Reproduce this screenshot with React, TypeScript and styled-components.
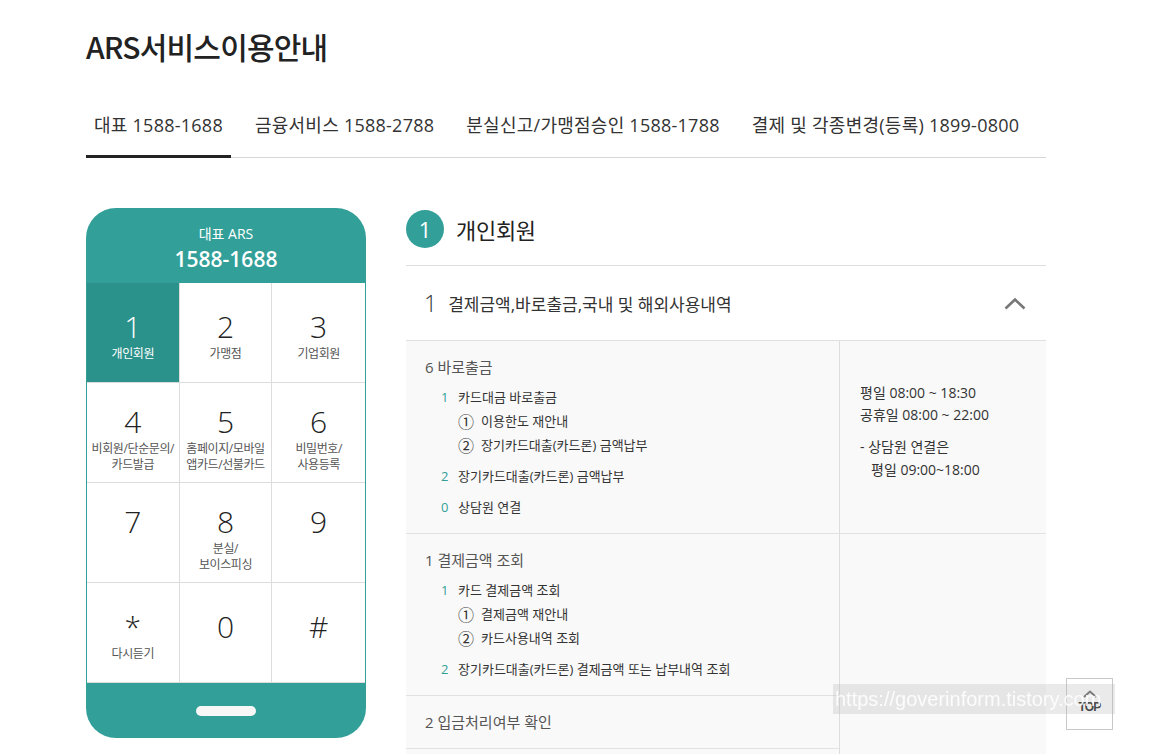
import React from "react";
import styled, { createGlobalStyle } from "styled-components";

const TEAL = "#339f99";
const TEAL_DARK = "#2b918b";

const GlobalStyle = createGlobalStyle`
  body {
    margin: 0;
    background: #fff;
    font-family: "Open Sans", "Noto Sans CJK KR", sans-serif;
    color: #333;
  }
`;

const Page = styled.div`
  width: 960px;
  padding: 28px 0 40px 86px;
`;

const Title = styled.h1`
  margin: 0;
  font-family: "Noto Sans CJK KR", sans-serif;
  font-size: 30px;
  line-height: 36px;
  font-weight: 500;
  letter-spacing: -0.8px;
  color: #222;
`;

const Tabs = styled.div`
  display: flex;
  gap: 16px;
  margin-top: 49px;
  border-bottom: 1px solid #d8d8d8;
`;

const Tab = styled.div<{ $active?: boolean }>`
  position: relative;
  padding: 0 8px 20px;
  font-size: 18px;
  line-height: 24px;
  letter-spacing: 0.25px;
  color: #333;
  white-space: nowrap;

  &::after {
    content: "";
    display: ${(p) => (p.$active ? "block" : "none")};
    position: absolute;
    left: 0;
    right: 0;
    bottom: -1px;
    height: 3px;
    background: #222;
  }
`;

const Main = styled.div`
  display: flex;
  align-items: flex-start;
  gap: 40px;
  margin-top: 50px;
`;

/* phone keypad */

const Phone = styled.div`
  width: 280px;
  flex-shrink: 0;
  border-radius: 30px;
  overflow: hidden;
`;

const PhoneHeader = styled.div`
  height: 75px;
  box-sizing: border-box;
  padding-top: 17px;
  background: ${TEAL};
  color: #fff;
  text-align: center;
`;

const HeaderLabel = styled.div`
  font-size: 14px;
  line-height: 18px;
`;

const HeaderNumber = styled.div`
  margin-top: 3px;
  font-size: 21px;
  line-height: 26px;
  font-weight: 600;
`;

const KeyGrid = styled.div`
  display: grid;
  grid-template-columns: repeat(3, 1fr);
  border-left: 1px solid ${TEAL};
  border-right: 1px solid ${TEAL};
  background: #fff;
`;

const Key = styled.div<{ $active?: boolean; $lines: number }>`
  height: 100px;
  box-sizing: border-box;
  padding-top: ${(p) => (p.$lines === 2 ? 23 : 28)}px;
  display: flex;
  flex-direction: column;
  align-items: center;
  border-bottom: 1px solid #dcdcdc;
  border-right: 1px solid #dcdcdc;
  background: ${(p) => (p.$active ? TEAL_DARK : "#fff")};
  color: ${(p) => (p.$active ? "#fff" : "#222")};

  &:nth-child(3n) {
    border-right: none;
  }
`;

const KeyNum = styled.div`
  font-size: 30px;
  line-height: 32px;
  font-weight: 300;
`;

const KeyLabel = styled.div<{ $active?: boolean }>`
  margin-top: 3px;
  font-size: 12px;
  line-height: 16px;
  text-align: center;
  letter-spacing: -0.4px;
  color: ${(p) => (p.$active ? "#fff" : "#555")};
`;

const PhoneFooter = styled.div`
  height: 55px;
  background: ${TEAL};
  display: flex;
  align-items: center;
  justify-content: center;
`;

const HomeBar = styled.div`
  width: 60px;
  height: 10px;
  border-radius: 5px;
  background: #f7f7f7;
`;

/* right content */

const Content = styled.div`
  flex: 1;
`;

const SectionHeader = styled.div`
  display: flex;
  align-items: center;
  gap: 12px;
  padding: 2px 0 17px;
  border-bottom: 1px solid #dedede;
`;

const Circle = styled.div`
  width: 38px;
  height: 38px;
  border-radius: 50%;
  background: ${TEAL};
  color: #fff;
  font-size: 22px;
  display: flex;
  align-items: center;
  justify-content: center;
`;

const SectionTitle = styled.div`
  font-size: 22px;
  color: #222;
  letter-spacing: -0.3px;
`;

const AccordionHead = styled.div`
  height: 75px;
  box-sizing: border-box;
  display: flex;
  align-items: center;
  padding: 0 20px 0 18px;
  border-bottom: 1px solid #e0e0e0;
`;

const AccNum = styled.span`
  font-size: 23px;
  font-weight: 300;
  color: #333;
  margin-right: 11px;
`;

const AccText = styled.span`
  flex: 1;
  font-size: 17px;
  color: #333;
`;

const Table = styled.div`
  display: grid;
  grid-template-columns: 434px 1fr;
  background: #f9f9f9;
`;

const Block = styled.div<{ $hasList?: boolean }>`
  padding: 16px 19px ${(p) => (p.$hasList ? 14 : 16)}px;
  border-right: 1px solid #dddddd;
  border-bottom: 1px solid #e2e2e2;
`;

const BlockTitle = styled.div`
  font-size: 15px;
  line-height: 20px;
  color: #555;
`;

const List = styled.div`
  margin-top: 8px;
  padding-left: 16px;
`;

const Item = styled.div`
  & + & {
    margin-top: 7px;
  }
`;

const Row = styled.div`
  display: flex;
  align-items: center;
  font-size: 13px;
  line-height: 24px;
  color: #333;
`;

const Num = styled.span`
  width: 17px;
  color: ${TEAL};
`;

const SubRow = styled(Row)`
  padding-left: 17px;
`;

const SubNum = styled.span`
  width: 23px;
  font-family: "Noto Sans CJK KR", sans-serif;
  font-size: 16px;
  line-height: 24px;
`;

const Info = styled.div<{ $span?: number }>`
  grid-row: ${(p) => (p.$span ? `span ${p.$span}` : "auto")};
  padding: 41px 20px 0;
  font-size: 14px;
  line-height: 22px;
  color: #333;
  border-bottom: 1px solid #e2e2e2;
`;

const InfoGap = styled.div`
  height: 10px;
`;

const Indent = styled.div`
  padding-left: 11px;
  line-height: 24px;
`;

/* overlays */

const Watermark = styled.div`
  position: fixed;
  left: 833px;
  top: 684px;
  width: 280px;
  height: 30px;
  background: rgba(180, 180, 180, 0.28);
  color: rgba(255, 255, 255, 0.85);
  font-family: "Liberation Sans", Arial, sans-serif;
  font-size: 20px;
  line-height: 30px;
  padding-left: 2px;
  overflow: hidden;
  white-space: nowrap;
  z-index: 3;
`;

const TopButton = styled.div`
  position: fixed;
  right: 41px;
  bottom: 24px;
  width: 47px;
  height: 52px;
  box-sizing: border-box;
  border: 1px solid #c8c8c8;
  background: #fff;
  display: flex;
  flex-direction: column;
  align-items: center;
  padding-top: 11px;
  z-index: 2;
`;

const TopText = styled.div`
  margin-top: 2px;
  font-family: "Liberation Sans", Arial, sans-serif;
  font-size: 12px;
  font-weight: 700;
  letter-spacing: -0.8px;
  color: #222;
`;

const keys = [
  { n: "1", label: ["개인회원"], lines: 1, active: true },
  { n: "2", label: ["가맹점"], lines: 1 },
  { n: "3", label: ["기업회원"], lines: 1 },
  { n: "4", label: ["비회원/단순문의/", "카드발급"], lines: 2 },
  { n: "5", label: ["홈페이지/모바일", "앱카드/선불카드"], lines: 2 },
  { n: "6", label: ["비밀번호/", "사용등록"], lines: 2 },
  { n: "7", label: [], lines: 2 },
  { n: "8", label: ["분실/", "보이스피싱"], lines: 2 },
  { n: "9", label: [], lines: 2 },
  { n: "*", label: ["다시듣기"], lines: 1 },
  { n: "0", label: [], lines: 1 },
  { n: "#", label: [], lines: 1 },
];

const tabs = [
  "대표 1588-1688",
  "금융서비스 1588-2788",
  "분실신고/가맹점승인 1588-1788",
  "결제 및 각종변경(등록) 1899-0800",
];

export default function App() {
  return (
    <>
      <GlobalStyle />
      <Page>
        <Title>ARS서비스이용안내</Title>
        <Tabs>
          {tabs.map((t, i) => (
            <Tab key={t} $active={i === 0}>
              {t}
            </Tab>
          ))}
        </Tabs>

        <Main>
          <Phone>
            <PhoneHeader>
              <HeaderLabel>대표 ARS</HeaderLabel>
              <HeaderNumber>1588-1688</HeaderNumber>
            </PhoneHeader>
            <KeyGrid>
              {keys.map((k) => (
                <Key key={k.n} $active={k.active} $lines={k.lines}>
                  <KeyNum>{k.n}</KeyNum>
                  {k.label.length > 0 && (
                    <KeyLabel $active={k.active}>
                      {k.label.map((l) => (
                        <div key={l}>{l}</div>
                      ))}
                    </KeyLabel>
                  )}
                </Key>
              ))}
            </KeyGrid>
            <PhoneFooter>
              <HomeBar />
            </PhoneFooter>
          </Phone>

          <Content>
            <SectionHeader>
              <Circle>1</Circle>
              <SectionTitle>개인회원</SectionTitle>
            </SectionHeader>

            <AccordionHead>
              <AccNum>1</AccNum>
              <AccText>결제금액,바로출금,국내 및 해외사용내역</AccText>
              <svg width="22" height="13" viewBox="0 0 22 13">
                <polyline
                  points="1.5,11.5 11,2.5 20.5,11.5"
                  fill="none"
                  stroke="#777"
                  strokeWidth="2.6"
                />
              </svg>
            </AccordionHead>

            <Table>
              <Block $hasList>
                <BlockTitle>6 바로출금</BlockTitle>
                <List>
                  <Item>
                    <Row>
                      <Num>1</Num>카드대금 바로출금
                    </Row>
                    <SubRow>
                      <SubNum>①</SubNum>이용한도 재안내
                    </SubRow>
                    <SubRow>
                      <SubNum>②</SubNum>장기카드대출(카드론) 금액납부
                    </SubRow>
                  </Item>
                  <Item>
                    <Row>
                      <Num>2</Num>장기카드대출(카드론) 금액납부
                    </Row>
                  </Item>
                  <Item>
                    <Row>
                      <Num>0</Num>상담원 연결
                    </Row>
                  </Item>
                </List>
              </Block>
              <Info>
                <div>평일 08:00 ~ 18:30</div>
                <div>공휴일 08:00 ~ 22:00</div>
                <InfoGap />
                <div>- 상담원 연결은</div>
                <Indent>평일 09:00~18:00</Indent>
              </Info>

              <Block $hasList>
                <BlockTitle>1 결제금액 조회</BlockTitle>
                <List>
                  <Item>
                    <Row>
                      <Num>1</Num>카드 결제금액 조회
                    </Row>
                    <SubRow>
                      <SubNum>①</SubNum>결제금액 재안내
                    </SubRow>
                    <SubRow>
                      <SubNum>②</SubNum>카드사용내역 조회
                    </SubRow>
                  </Item>
                  <Item>
                    <Row>
                      <Num>2</Num>장기카드대출(카드론) 결제금액 또는 납부내역 조회
                    </Row>
                  </Item>
                </List>
              </Block>
              <Info $span={3} />

              <Block>
                <BlockTitle>2 입금처리여부 확인</BlockTitle>
              </Block>
              <Block>
                <BlockTitle>3 해외사용내역 조회</BlockTitle>
              </Block>
            </Table>
          </Content>
        </Main>
      </Page>

      <TopButton>
        <svg width="14" height="8" viewBox="0 0 14 8">
          <polyline
            points="1,7 7,1.5 13,7"
            fill="none"
            stroke="#666"
            strokeWidth="2"
          />
        </svg>
        <TopText>TOP</TopText>
      </TopButton>
      <Watermark>https://goverinform.tistory.com</Watermark>
    </>
  );
}
